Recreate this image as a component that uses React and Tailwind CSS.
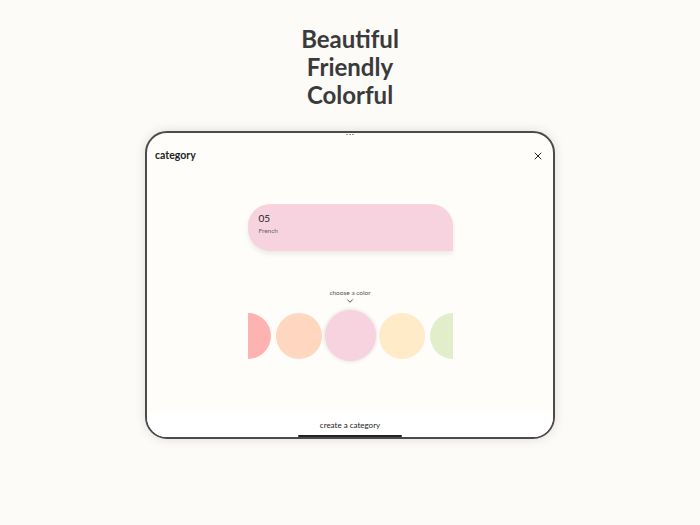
import { X, ChevronDown } from 'lucide-react';

const colors = [
    { id: 'red', bg: 'bg-[#ffb3b0]' },
    { id: 'peach', bg: 'bg-[#ffd6bf]' },
    { id: 'pink', bg: 'bg-[#f7d3e0]', active: true },
    { id: 'yellow', bg: 'bg-[#ffebc7]' },
    { id: 'green', bg: 'bg-[#e2edca]' },
];

function App() {
    return (
        <div className="w-[700px] h-[525px] bg-[#fcfbf8] flex flex-col items-center font-['Lato','Noto_Sans',sans-serif] text-[#333]">
            <div className="pt-[25px] text-center text-[24px] leading-[28px] font-bold text-[#3a3a3a]">
                <div>Beautiful</div>
                <div>Friendly</div>
                <div>Colorful</div>
            </div>

            <div className="mt-[22px] w-[410px] h-[308px] rounded-[22px] border-2 border-[#4b4b4b] bg-[#fefdf9] shadow-[0_0_12px_rgba(0,0,0,0.12)] overflow-hidden flex flex-col">
                <div className="flex justify-center h-[4px] pt-[1px]">
                    <div className="flex gap-[1px]">
                        <span className="w-[2px] h-[1px] bg-[#999]"></span>
                        <span className="w-[2px] h-[1px] bg-[#999]"></span>
                        <span className="w-[2px] h-[1px] bg-[#999]"></span>
                    </div>
                </div>
                <div className="flex items-center justify-between pl-[8px] pr-[9px] mt-[11px]">
                    <span className="text-[10.5px] font-bold text-[#222]">category</span>
                    <X className="w-[12px] h-[12px] text-[#222]" strokeWidth={2} />
                </div>

                <div className="flex-1 flex flex-col items-center">
                    <div className="w-[205px] mt-[40px] pb-[6px]">
                        <div className="h-[47px] w-[205px] bg-[#f7d3e0] rounded-tl-[22px] rounded-tr-[22px] rounded-bl-[22px] shadow-[0_3px_5px_rgba(0,0,0,0.08)] pl-[11px] pt-[7px]">
                            <div className="text-[10px] leading-[14px] text-[#222]">05</div>
                            <div className="text-[6.5px] leading-[10px] mt-[1px] text-[#666]">French</div>
                        </div>
                    </div>

                    <div className="mt-[31px] flex flex-col items-center">
                        <span className="text-[6.5px] leading-[9px] text-[#555]">choose a color</span>
                        <ChevronDown className="w-[10px] h-[10px] text-[#333] -mt-[1px]" strokeWidth={2} />
                    </div>

                    <div className="w-[205px] h-[60px] overflow-hidden flex items-center justify-center mt-[0px]">
                        <div className="flex items-center gap-[5px] shrink-0">
                            {colors.map((c) => (
                                <div
                                    key={c.id}
                                    className={`${c.bg} rounded-full shrink-0 ${
                                        c.active
                                            ? 'w-[51px] h-[51px] -mx-[2px] shadow-[0_0_4px_rgba(0,0,0,0.15)]'
                                            : 'w-[46px] h-[46px]'
                                    }`}
                                ></div>
                            ))}
                        </div>
                    </div>
                </div>

                <div className="h-[24px] bg-white flex flex-col items-center justify-end">
                    <span className="text-[8px] leading-[10px] text-[#222]">create a category</span>
                    <div className="w-[104px] h-[2px] bg-[#222] rounded-full mt-[5px] mb-0"></div>
                </div>
            </div>
        </div>
    );
}

export default App;
